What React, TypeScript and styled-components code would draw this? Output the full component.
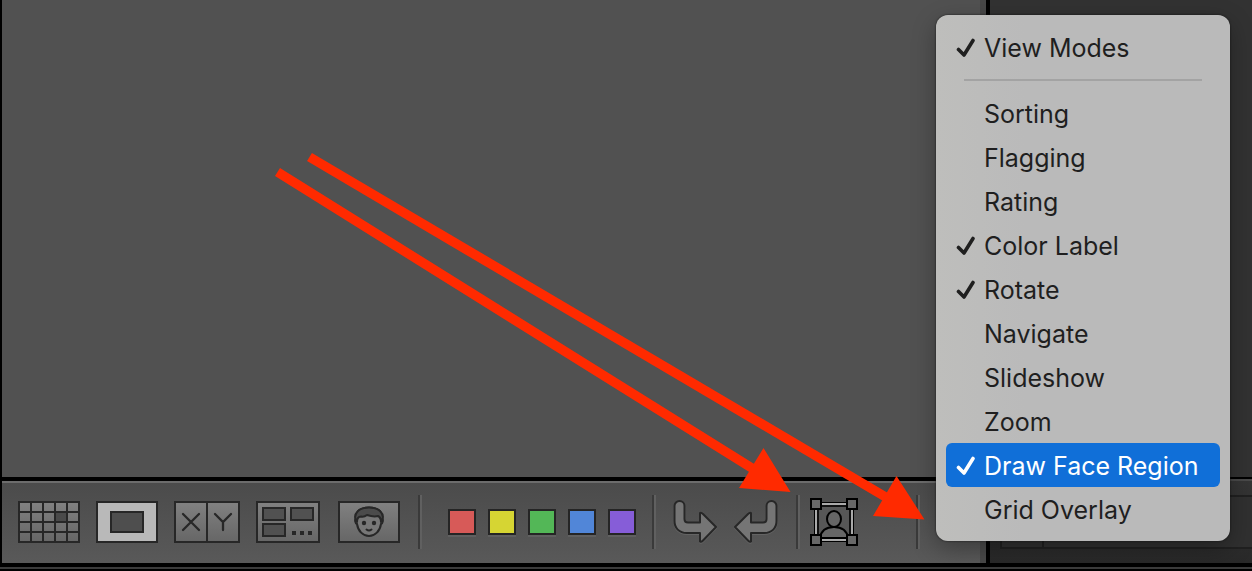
import React from "react";
import styled, { createGlobalStyle } from "styled-components";

const GlobalStyle = createGlobalStyle`
  * { box-sizing: border-box; }
  body { margin: 0; background: #000; font-family: Inter, "Liberation Sans", sans-serif; }
  button { font: inherit; color: inherit; border: 0; padding: 0; background: none; }
`;

const Screen = styled.div`
  position: relative;
  min-height: 100vh;
  display: flex;
  flex-direction: column;
  background: #000;
  overflow: hidden;
`;

const Workspace = styled.div`
  flex: 1;
  display: flex;
  gap: 4px;
  padding-left: 2px;
`;

const Main = styled.main`
  flex: 1;
  min-width: 0;
  display: flex;
  flex-direction: column;
  gap: 4px;
`;

const Canvas = styled.section`
  flex: 1;
  background: #515151;
  border-right: 6px solid #474747;
`;

const Toolbar = styled.div`
  height: 82px;
  display: flex;
  align-items: center;
  padding: 0 0 2px 16px;
  background: linear-gradient(#4b4b4b, #595959);
  border-top: 2px solid #6c6c6c;
  border-right: 6px solid #4a4a4a;
`;

const Group = styled.div<{ $gap: number }>`
  display: flex;
  align-items: center;
  gap: ${(p) => p.$gap}px;
`;

const ToolButton = styled.button`
  display: flex;
  flex: none;
  svg { display: block; overflow: visible; }
`;

const Divider = styled.div<{ $before: number; $after: number }>`
  flex: none;
  width: 4px;
  height: 54px;
  margin: 0 ${(p) => p.$after}px 0 ${(p) => p.$before}px;
  border-left: 2px solid #3a3a3a;
  border-right: 2px solid #606060;
`;

const Swatch = styled.button<{ $color: string }>`
  flex: none;
  width: 28px;
  height: 26px;
  border: 2px solid #252525;
  background: ${(p) => p.$color};
  box-shadow: 0 2px 0 #606060;
`;

const SidePanel = styled.aside`
  width: 262px;
  display: flex;
  flex-direction: column;
  background: #323232;
`;

const SideBody = styled.div`
  flex: 1;
`;

const SideFooter = styled.div`
  height: 86px;
  padding: 16px 0 14px 10px;
  background: linear-gradient(#353535, #292929);
  border-top: 2px solid #000;
  box-shadow: inset 0 2px 0 #4a4a4a;
`;

const SideField = styled.div`
  height: 54px;
  border: 2px solid #202020;
  border-right: 0;
  background: #303030;
  &::before {
    content: "";
    display: block;
    width: 40px;
    height: 100%;
    border-right: 2px solid #202020;
  }
`;

const BottomEdge = styled.footer`
  height: 8px;
  border-top: 4px solid #000;
  border-bottom: 2px solid #000;
  background: #3c3c3c;
`;

const Menu = styled.div`
  position: absolute;
  right: 22px;
  bottom: 30px;
  width: 294px;
  padding: 10px;
  border-radius: 12px;
  background: linear-gradient(90deg, #bebebc, #bababa 30%);
  box-shadow: 0 0 2px #111, 0 8px 24px rgba(0, 0, 0, 0.3);
`;

const MenuItem = styled.button<{ $active?: boolean }>`
  display: flex;
  align-items: center;
  width: 100%;
  height: 44px;
  padding: 2px 0 0 10px;
  border-radius: 6px;
  text-align: left;
  white-space: nowrap;
  font-size: 25px;
  line-height: 42px;
  color: ${(p) => (p.$active ? "#fff" : "#1f1f1f")};
  background: ${(p) => (p.$active ? "#106fd8" : "transparent")};
`;

const CheckSlot = styled.span`
  flex: none;
  width: 28px;
  display: flex;
`;

const MenuRule = styled.hr`
  height: 2px;
  margin: 10px 18px;
  border: 0;
  background: #a3a3a3;
`;

const Annotation = styled.svg`
  position: absolute;
  left: 0;
  top: 0;
  pointer-events: none;
`;

const ink = "#272727";

const Face = () => (
  <linearGradient id="face" x1="0" y1="0" x2="0" y2="1">
    <stop offset="0" stopColor="#818181" />
    <stop offset="1" stopColor="#666" />
  </linearGradient>
);

const Frame = ({ w }: { w: number }) => (
  <rect x="1" y="1" width={w - 2} height="40" fill="url(#face)" stroke={ink} strokeWidth="2" />
);

const GridIcon = () => (
  <svg width="62" height="42">
    <defs><Face /></defs>
    <Frame w={62} />
    <rect x="38" y="12" width="10" height="9" fill="#4a4a4a" />
    <path d="M13 1v40M25 1v40M37 1v40M49 1v40M1 11h60M1 21h60M1 31h60" stroke={ink} strokeWidth="2" />
  </svg>
);

const LoupeIcon = () => (
  <svg width="62" height="42">
    <rect x="1" y="1" width="60" height="40" fill="#b9b9b9" stroke={ink} strokeWidth="2" />
    <rect x="15" y="11" width="32" height="20" fill="#4e4e4e" stroke={ink} strokeWidth="2" />
  </svg>
);

const CompareIcon = () => (
  <svg width="66" height="42">
    <Frame w={66} />
    <path d="M33 1v40" stroke={ink} strokeWidth="2" />
    <path d="M9 13l16 16M25 13L9 29M41 13l8 8 8-8M49 21v8" fill="none" stroke={ink} strokeWidth="2.300" strokeLinecap="round" />
  </svg>
);

const SurveyIcon = () => (
  <svg width="66" height="42">
    <Frame w={64} />
    <g fill="#515151" stroke={ink} strokeWidth="2">
      <rect x="7" y="7" width="22" height="12" />
      <rect x="35" y="7" width="22" height="12" />
      <rect x="7" y="23" width="22" height="12" />
    </g>
    <path d="M36 30h4v4h-4zM44 30h4v4h-4zM52 30h4v4h-4z" fill={ink} />
  </svg>
);

const PeopleIcon = () => (
  <svg width="62" height="42">
    <Frame w={62} />
    <path d="M18 17C18 10 23 6.500 31 6.500S44 10 44 17c1.500 2 1 5-1 6-1 7-6 12-12 12s-11-5-12-12c-2-1-2.500-4-1-6z" fill="#777" stroke={ink} strokeWidth="2" />
    <path d="M19 21c-3-4-2-8 1-11 3-2.500 6-3.500 11-3.500s8 1 11 3.500c3 3 4 7 1 11 0-3-1-5-3-6-4 1-8 0-11-1-2 1.500-4 2-6 1.500-3 0-4 2.500-4 5.500z" fill="#4b4b4b" stroke={ink} strokeWidth="2" strokeLinejoin="round" />
    <circle cx="26" cy="22" r="2.200" fill={ink} />
    <circle cx="36" cy="22" r="2.200" fill={ink} />
    <path d="M28.500 28.500q2.500 2 5 0" fill="none" stroke={ink} strokeWidth="2" strokeLinecap="round" />
  </svg>
);

const turn = "M1.500 6a5 5 0 0 1 10 0v13c0 2.500 1 3.500 3.500 3.500h12V13c1-.8 2 0 3 1L43 27 30 40.500c-1 1-2 1.800-3 1V33H14C6 33 1.500 28 1.500 21z";

const RotateIcon = ({ flip }: { flip?: boolean }) => (
  <svg width="46" height="44" viewBox="0 0 46 44">
    <g transform={flip ? "matrix(-1 0 0 1 44 0)" : "translate(1 0)"} strokeLinejoin="round">
      <path d={turn} fill="none" stroke="#646464" strokeWidth="2" transform="translate(0 1)" />
      <path d={turn} fill="#757575" stroke={ink} strokeWidth="2" />
    </g>
  </svg>
);

const FaceRegionIcon = () => (
  <svg width="48" height="48">
    <rect x="5" y="5" width="38" height="38" fill="#575757" stroke="#000" strokeWidth="2" />
    <rect x="6" y="6" width="36" height="36" fill="none" stroke="#aaa" strokeWidth="2" />
    <rect x="8" y="8" width="32" height="32" fill="none" stroke="#111" strokeWidth="2" />
    <path d="M10 40c1-7 6-11 14-11s13 4 14 11z" fill="#666" stroke="#000" strokeWidth="2" />
    <ellipse cx="24" cy="21" rx="7" ry="8" fill="#666" stroke="#000" strokeWidth="2" />
    <g fill="#686868" stroke="#000" strokeWidth="2">
      <rect x="1" y="1" width="10" height="10" />
      <rect x="37" y="1" width="10" height="10" />
      <rect x="1" y="37" width="10" height="10" />
      <rect x="37" y="37" width="10" height="10" />
    </g>
  </svg>
);

const CheckIcon = () => (
  <svg width="20" height="20" viewBox="0 0 20 20" aria-hidden="true">
    <path d="M2.500 11.500L8 17 17 2.500" fill="none" stroke="currentColor" strokeWidth="3.600" strokeLinecap="round" strokeLinejoin="round" />
  </svg>
);

const labels = [
  { name: "Red", color: "#d75a58" },
  { name: "Yellow", color: "#d6d533" },
  { name: "Green", color: "#53b757" },
  { name: "Blue", color: "#5186d8" },
  { name: "Purple", color: "#865dd8" },
];

const options = [
  { text: "Sorting" },
  { text: "Flagging" },
  { text: "Rating" },
  { text: "Color Label", checked: true },
  { text: "Rotate", checked: true },
  { text: "Navigate" },
  { text: "Slideshow" },
  { text: "Zoom" },
  { text: "Draw Face Region", checked: true, active: true },
  { text: "Grid Overlay" },
];

type OptionProps = { text: string; checked?: boolean; active?: boolean };

const Option = ({ text, checked = false, active }: OptionProps) => (
  <MenuItem type="button" role="menuitemcheckbox" aria-checked={checked} $active={active}>
    <CheckSlot>{checked && <CheckIcon />}</CheckSlot>
    {text}
  </MenuItem>
);

export default function App() {
  return (
    <Screen>
      <GlobalStyle />
      <Workspace>
        <Main>
          <Canvas />
          <Toolbar role="toolbar">
            <Group $gap={16}>
              <ToolButton aria-label="Grid view"><GridIcon /></ToolButton>
              <ToolButton aria-label="Loupe view"><LoupeIcon /></ToolButton>
              <ToolButton aria-label="Compare view"><CompareIcon /></ToolButton>
              <ToolButton aria-label="Survey view"><SurveyIcon /></ToolButton>
              <ToolButton aria-label="People view"><PeopleIcon /></ToolButton>
            </Group>
            <Divider $before={18} $after={26} />
            <Group $gap={12}>
              {labels.map((l) => (
                <Swatch key={l.name} aria-label={l.name} $color={l.color} />
              ))}
            </Group>
            <Divider $before={16} $after={16} />
            <Group $gap={16}>
              <ToolButton aria-label="Rotate left"><RotateIcon /></ToolButton>
              <ToolButton aria-label="Rotate right"><RotateIcon flip /></ToolButton>
            </Group>
            <Divider $before={16} $after={10} />
            <ToolButton aria-label="Draw face region"><FaceRegionIcon /></ToolButton>
            <Divider $before={58} $after={0} />
          </Toolbar>
        </Main>
        <SidePanel>
          <SideBody />
          <SideFooter><SideField /></SideFooter>
        </SidePanel>
      </Workspace>
      <BottomEdge />
      <Annotation width="940" height="571" aria-hidden="true">
        <g stroke="#ff2a00" strokeWidth="9.500" fill="none">
          <path d="M277.500 172L755 470" />
          <path d="M309.500 157L889 499" />
        </g>
        <path d="M763.500 448L790.500 492 739 488zM896.500 476L924.500 519.500 873 516z" fill="#ff2a00" />
      </Annotation>
      <Menu role="menu">
        <Option text="View Modes" checked />
        <MenuRule />
        {options.map((o) => (
          <Option key={o.text} {...o} />
        ))}
      </Menu>
    </Screen>
  );
}
